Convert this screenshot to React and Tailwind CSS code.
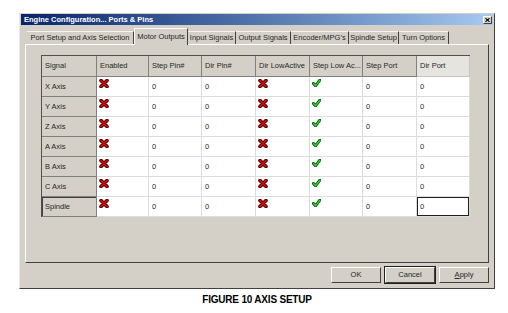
import React from 'react';

const cols = [
    { label: 'Signal', w: 'w-[55px]' },
    { label: 'Enabled', w: 'w-[52px]' },
    { label: 'Step Pin#', w: 'w-[53px]' },
    { label: 'Dir Pin#', w: 'w-[54px]' },
    { label: 'Dir LowActive', w: 'w-[54px]' },
    { label: 'Step Low Ac...', w: 'w-[53px]' },
    { label: 'Step Port', w: 'w-[54px]' },
    { label: 'Dir Port', w: 'w-[53px]' },
];

const rows = ['X Axis', 'Y Axis', 'Z Axis', 'A Axis', 'B Axis', 'C Axis', 'Spindle'];
// what goes in each data column
const kinds = ['x', '0', '0', 'x', 'check', '0', '0'];

const tabs = [
    { label: 'Port Setup and Axis Selection', w: 'w-[107px]' },
    { label: 'Motor Outputs', w: 'w-[54px]', active: true },
    { label: 'Input Signals', w: 'w-[48px]' },
    { label: 'Output Signals', w: 'w-[55px]' },
    { label: "Encoder/MPG's", w: 'w-[58px]' },
    { label: 'Spindle Setup', w: 'w-[50px]' },
    { label: 'Turn Options', w: 'w-[50px]' },
];

const RedX = () => (
    <svg width="10" height="9" viewBox="0 0 10 9">
        <path d="M2 1.5 L8 7.5 M8 1.5 L2 7.5" stroke="#3a0000" strokeWidth="3.6" strokeLinecap="round" fill="none" />
        <path d="M2 1.5 L8 7.5 M8 1.5 L2 7.5" stroke="#c80c0c" strokeWidth="1.8" strokeLinecap="round" fill="none" />
    </svg>
);

const Check = () => (
    <svg width="9" height="8" viewBox="0 0 9 8">
        <path d="M1.5 4.5 L3.5 6.8 L7.8 1.2" stroke="#0b4a0b" strokeWidth="3" strokeLinecap="round" strokeLinejoin="round" fill="none" />
        <path d="M1.5 4.5 L3.5 6.8 L7.8 1.2" stroke="#2fd02f" strokeWidth="1.4" strokeLinecap="round" strokeLinejoin="round" fill="none" />
    </svg>
);

const Button = ({ children, def }) => (
    <div className={`w-[50px] h-[16px] flex items-center justify-center bg-[#d4d0c8] border border-t-white border-l-white border-r-[#404040] border-b-[#404040] ${def ? 'outline outline-1 outline-[#202020]' : ''}`}>
        {children}
    </div>
);

export default function App() {
    return (
        <div className="w-[508px] h-[313px] bg-white pt-[13px] pl-[19px] text-[7.5px] text-[#262626]" style={{ fontFamily: '"Liberation Sans", Arial, sans-serif' }}>
            {/* Window */}
            <div className="w-[476px] h-[276px] bg-[#d4d0c8] border border-t-[#d4d0c8] border-l-[#ebe9e4] border-r-[#404040] border-b-[#404040] flex flex-col overflow-hidden">
                {/* Title bar */}
                <div className="mx-[1px] h-[11px] flex items-center justify-between pl-[3px] pr-[1px] bg-linear-to-r from-[#0a246a] to-[#a6caf0]">
                    <span className="text-white font-bold text-[7.5px] leading-none">Engine Configuration... Ports &amp; Pins</span>
                    <div className="w-[9px] h-[8px] bg-[#d4d0c8] border border-t-white border-l-white border-r-[#404040] border-b-[#404040] flex items-center justify-center">
                        <svg width="5" height="4" viewBox="0 0 5 4">
                            <path d="M0.5 0.2 L4.5 3.8 M4.5 0.2 L0.5 3.8" stroke="#000" strokeWidth="1.1" />
                        </svg>
                    </div>
                </div>

                {/* Tabs */}
                <div className="ml-[5px] mt-[3px] h-[16px] pl-[2px] flex items-end">
                    {tabs.map(t => (
                        t.active ? (
                            <div key={t.label} className={`${t.w} h-[17px] -mb-[1px] relative z-10 bg-[#d4d0c8] border-t border-l border-r border-t-white border-l-white border-r-[#404040] flex items-center justify-center pb-[1px] whitespace-nowrap`}>
                                {t.label}
                            </div>
                        ) : (
                            <div key={t.label} className={`${t.w} h-[13px] border-t border-r border-t-[#f4f3f0] border-r-[#404040] flex items-center justify-center whitespace-nowrap`}>
                                {t.label}
                            </div>
                        )
                    ))}
                </div>

                {/* Tab page */}
                <div className="ml-[5px] w-[464px] h-[219px] border border-t-white border-l-white border-r-[#404040] border-b-[#404040] pl-[15px] pt-[10px]">
                    <div className="w-max border-l border-t border-l-[#505050] border-t-[#505050]">
                        {/* header */}
                        <div className="flex h-[21px]">
                            {cols.map((c, i) => (
                                <div
                                    key={c.label}
                                    className={`${c.w} h-full flex items-center pl-[3px] border-b border-r whitespace-nowrap overflow-hidden ${i === 7 ? 'bg-[#e6e4df] border-b-[#c8c5bd] border-r-[#c8c5bd]' : 'bg-[#d4d0c8] border-b-[#808080] border-r-[#808080]'} ${i === 6 ? 'border-r-[#404040]' : ''}`}
                                >
                                    {c.label}
                                </div>
                            ))}
                        </div>
                        {/* rows */}
                        {rows.map((r, ri) => (
                            <div key={r} className="flex h-[20px]">
                                <div className={`${cols[0].w} h-full flex items-center pl-[3px] bg-[#d4d0c8] border-b border-r border-b-[#808080] border-r-[#808080] ${r === 'Spindle' ? 'shadow-[inset_1px_1px_0_#404040]' : ''}`}>
                                    {r}
                                </div>
                                {kinds.map((k, ci) => {
                                    const focus = ri === rows.length - 1 && ci === kinds.length - 1;
                                    return (
                                        <div
                                            key={ci}
                                            className={`${cols[ci + 1].w} h-full bg-white border-b border-r border-b-[#dcdcdc] border-r-[#dcdcdc] flex ${k === '0' ? 'items-center pl-[3px]' : 'items-start pt-[2px] pl-[2px]'} ${focus ? 'shadow-[inset_0_0_0_1px_#202020]' : ''}`}
                                        >
                                            {k === 'x' && <RedX />}
                                            {k === 'check' && <Check />}
                                            {k === '0' && <span>0</span>}
                                        </div>
                                    );
                                })}
                            </div>
                        ))}
                    </div>
                </div>

                {/* Buttons */}
                <div className="mt-[4px] pr-[5px] flex justify-end gap-[4px]">
                    <Button>OK</Button>
                    <Button def>Cancel</Button>
                    <Button><span><span className="underline">A</span>pply</span></Button>
                </div>
            </div>

            {/* Caption */}
            <div className="w-[476px] mt-[5px] text-center font-bold text-[10px] leading-[12px] tracking-[-0.2px] text-black">
                FIGURE 10 AXIS SETUP
            </div>
        </div>
    );
}
